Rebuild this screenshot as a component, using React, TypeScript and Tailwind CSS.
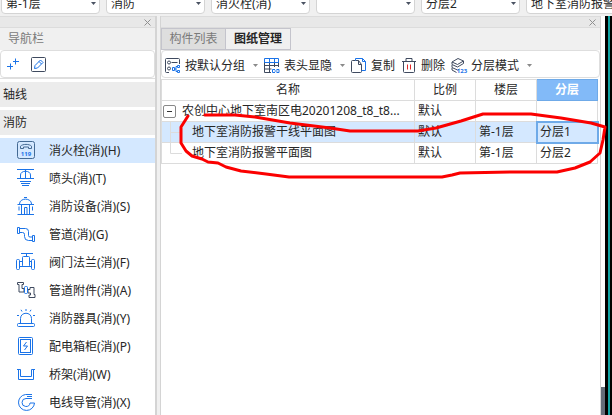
import React, { useState } from 'react';

const BLUE = '#1a73e8';
const DARK = '#3f4a5f';

const filters = ['第-1层', '消防', '消火栓(消)', '', '分层2', '地下室消防报警干线平面图'];

function Icon({ children, color = BLUE }: { children: React.ReactNode; color?: string }) {
  return (
    <svg className="h-[19px] w-5 shrink-0" viewBox="0 0 20 19" fill="none" stroke={color} aria-hidden="true">
      {children}
    </svg>
  );
}

const navItems = [
  {
    label: '消火栓(消)(H)',
    icon: (
      <Icon color="#446a94">
        <rect x="1.5" y="0.5" width="17" height="17" rx="2" />
        <path d="M4.5 7.5V5.2C6.5 2.8 13.5 2.8 15.5 5.2v2.3h-3V6h-5v1.5z" />
        <text x="10" y="14.5" textAnchor="middle" fontSize="6" fontWeight="bold" fill={BLUE} stroke="none">119</text>
      </Icon>
    ),
  },
  {
    label: '喷头(消)(T)',
    icon: (
      <Icon>
        <path d="M1 .5h17M9.500 .5v9M4.500 9.500V6c0-5 10-5 10 0v3.500M1 9.500h17M4 12.500h11M5 14.500h9M6 16.500h7" />
      </Icon>
    ),
  },
  {
    label: '消防设备(消)(S)',
    icon: (
      <Icon>
        <path d="M8 .5h3M3.500 7C3.500.5 15.500.5 15.500 7M1.500 7.500h16.500M3 9.500v4M16.500 9.500v4M5.500 8v9.500M13.500 8v9.500M8.500 17V10.500h2.500V17M1.500 17.500h16.500" />
      </Icon>
    ),
  },
  {
    label: '管道(消)(G)',
    icon: (
      <Icon>
        <path d="M1.500 2.500h2v6h-2zM3.500 3.500h6q3 0 3 3v4q0 1.500 1.500 1.500h2.500M3.500 7.500h3q2 0 2 2v2q0 4 4 4h4M16.500 10.500h2v6h-2z" />
      </Icon>
    ),
  },
  {
    label: '阀门法兰(消)(F)',
    icon: (
      <Icon>
        <path d="M5 .5h12M10.500 .5v3M7.500 3.500h5q1 0 1 1V12.500q0 1-1 1h-5q-1 0-1-1V4.500q0-1 1-1zM3.500 8.500h3M13.500 8.500h2M3.500 13.500h12" />
        <rect x=".5" y="6.500" width="3" height="10" rx="1" />
        <rect x="15.500" y="6.500" width="3" height="10" rx="1" />
      </Icon>
    ),
  },
  {
    label: '管道附件(消)(A)',
    icon: (
      <Icon color={DARK}>
        <path d="M1.500 1.500h6v2h-1.500v4h2v3.500h-5V3.500h-1.500zM12 8.500h2v-2h4v7h1v3h-6v-2.500h1.500V12H12z" />
        <rect x="8.500" y="5.500" width="3" height="7" rx="1" stroke={BLUE} />
      </Icon>
    ),
  },
  {
    label: '消防器具(消)(Y)',
    icon: (
      <Icon>
        <path d="M4.500 14V9.500c0-7 11-7 11 0V14M10 0v2M5 .8l1 1.700M15 .8l-1 1.700M1 6.500h2M17 6.500h2" />
        <rect x="1.500" y="14.500" width="17" height="3" rx="1" />
      </Icon>
    ),
  },
  {
    label: '配电箱柜(消)(P)',
    icon: (
      <Icon>
        <rect x="2.500" y=".5" width="14" height="17" rx="1" />
        <rect x="4.500" y="2.500" width="10" height="13" />
        <path d="M10.500 5l-3 4h4l-3 4" />
      </Icon>
    ),
  },
  {
    label: '桥架(消)(W)',
    icon: (
      <Icon>
        <path d="M1 4.500h3.500v7h11v-7H19M2.500 5v9.500h15V5" />
      </Icon>
    ),
  },
  {
    label: '电线导管(消)(X)',
    icon: (
      <Icon>
        <path d="M16 1.500H9.500a8 8 0 1 0 9 8.500h-4.500a4 4 0 1 1-4-4.500H16M11 3.500h5" />
      </Icon>
    ),
  },
];

const columns = ['名称', '比例', '楼层', '分层'];

const drawings = [
  { name: '地下室消防报警干线平面图', scale: '默认', floor: '第-1层', layer: '分层1' },
  { name: '地下室消防报警平面图', scale: '默认', floor: '第-1层', layer: '分层2' },
];

const tools = [
  {
    label: '按默认分组',
    menu: true,
    icon: (
      <svg className="h-4 w-4" viewBox="0 0 16 16" fill="none" stroke={DARK} aria-hidden="true">
        <path d="M14.500 6V1.500q0-1-1-1h-12q-1 0-1 1v12q0 1 1 1H4M6.500 4.500h6" />
        <circle cx="4" cy="4.500" r="1.500" />
        <circle cx="4" cy="10.500" r="1.500" />
        <path stroke={BLUE} d="M7.500 9.500h2v3h-2zM12.500 7.500h2v2h-2zM12.500 12.500h2v2h-2zM9.500 11h1.500M12.500 8.500H11v5h1.500" />
      </svg>
    ),
  },
  {
    label: '表头显隐',
    menu: true,
    icon: (
      <svg className="h-4 w-4" viewBox="0 0 16 16" fill="none" stroke={DARK} aria-hidden="true">
        <path d="M.5 4v10.500H7M.5 7.500h14M.5 11h7M5.500 4v10.500M10.500 4v5M14.500 4v5" />
        <path stroke={BLUE} d="M.5 4.500v-4h14v4zM5.500 .5v4M10.500 .5v4M11 11.500H8.500v3H11M12.500 11.500H15v3h-2.500M10.500 13h3" />
      </svg>
    ),
  },
  {
    label: '复制',
    icon: (
      <svg className="h-4 w-4" viewBox="0 0 16 16" fill="none" stroke={DARK} aria-hidden="true">
        <path d="M4.500 2.500h-3q-1 0-1 1v10q0 1 1 1h8q1 0 1-1V6.500l-3-4h-3M7.500 2.500v4h3" />
        <path stroke={BLUE} d="M4.500 2.500v-2h7l3 3v9h-4M11.500 .5v3h3" />
      </svg>
    ),
  },
  {
    label: '删除',
    icon: (
      <svg className="h-4 w-4" viewBox="0 0 16 16" fill="none" stroke={DARK} aria-hidden="true">
        <path d="M1 3.500h14M5 3V.5h6V3M2.500 4v9.500q0 1 1 1h9q1 0 1-1V4" />
        <path stroke="#e02828" d="M6.500 6.500v5M9.500 6.500v5" />
      </svg>
    ),
  },
  {
    label: '分层模式',
    menu: true,
    icon: (
      <svg className="h-4 w-4 overflow-visible" viewBox="0 0 16 16" fill="none" stroke={DARK} aria-hidden="true">
        <path d="M1 4l6-3.500L12.500 3 6.500 6.500zM1 4v2.500L6.500 9l6-3.500V3M1 7v2.500L6.500 12l2-1M1 10v2l4.500 2.500" />
        <text x="11" y="14.500" textAnchor="middle" fontSize="6" fontWeight="bold" fill={BLUE} stroke="none">123</text>
      </svg>
    ),
  },
];

function Caret({ className = '' }: { className?: string }) {
  return (
    <svg className={`h-[3px] w-[5px] shrink-0 ${className}`} viewBox="0 0 5 3" fill="currentColor" aria-hidden="true">
      <path d="M0 0h5L2.500 3z" />
    </svg>
  );
}

function PanelStrip() {
  return (
    <div className="flex h-3 shrink-0 items-center justify-end border-y border-[#dcdcdc] bg-[#e8e8e8] px-1">
      <button type="button" aria-label="关闭" className="text-[#909090]">
        <svg className="h-[7px] w-[7px]" viewBox="0 0 7 7" stroke="currentColor">
          <path d="M.5 .5l6 6M6.500 .5l-6 6" />
        </svg>
      </button>
    </div>
  );
}

function TreeLine({ last }: { last?: boolean }) {
  return (
    <svg className="h-5 w-3 shrink-0" viewBox="0 0 12 20" fill="none" stroke="#dcdcdc" aria-hidden="true">
      <path d={last ? 'M.5 0v10.500H12' : 'M.5 0v20M.5 10.500H12'} />
    </svg>
  );
}

export default function App() {
  const [active, setActive] = useState(0);
  const [open, setOpen] = useState(true);

  return (
    <div className="relative flex h-screen flex-col overflow-hidden bg-[#f0f0f0] font-['Noto_Sans','Noto_Sans_CJK_SC',sans-serif] text-xs text-[#262626]">
      <header className="flex h-4 shrink-0 items-end gap-1.5 overflow-hidden px-px pb-0.5">
        {filters.map((f, i) => (
          <div key={i} className="relative w-[99px] shrink-0">
            <select aria-label={`筛选${i + 1}`} className="block h-5 w-full appearance-none rounded-sm border border-[#d4d4d4] bg-white pl-1 leading-4">
              <option>{f}</option>
            </select>
            <Caret className="pointer-events-none absolute right-1 top-2 text-[#4a5262]" />
          </div>
        ))}
      </header>

      <main className="flex min-h-0 flex-1">
        <aside className="flex w-[157px] shrink-0 flex-col border-r-2 border-[#d4d4d4] bg-white">
          <PanelStrip />
          <h2 className="h-[22px] bg-[#f0f0f0] pl-2 leading-[22px] text-[#7a7a7a]">导航栏</h2>
          <div className="flex h-7 items-center gap-3 rounded border border-[#dedede] pl-1.5">
            <button type="button" aria-label="添加">
              <svg className="h-3 w-3" viewBox="0 0 12 12" stroke={BLUE}>
                <path d="M0 8.500h6M3.500 5.500v6M6 3.500h6M8.500 .5v6" />
              </svg>
            </button>
            <button type="button" aria-label="编辑">
              <svg className="h-[15px] w-[15px]" viewBox="0 0 15 15" fill="none" stroke={DARK}>
                <rect x=".5" y=".5" width="14" height="14" rx="1" />
                <path stroke={BLUE} d="M3.500 11.500l.5-3 5.500-5.500 2.500 2.500-5.500 5.500zM8 4.500l2.500 2.500" />
              </svg>
            </button>
          </div>
          <nav className="flex flex-col gap-[3px] border-t border-[#dedede] pt-[3px]">
            <button type="button" className="h-[25px] bg-[#ececec] pl-[3px] text-left">轴线</button>
            <button type="button" className="h-[25px] bg-[#ececec] pl-[3px] text-left">消防</button>
            {navItems.map((item, i) => (
              <button
                key={item.label}
                type="button"
                onClick={() => setActive(i)}
                className={`flex h-[25px] shrink-0 items-center gap-[13px] pl-4 text-left ${i === active ? 'bg-[#d4e8ff]' : ''}`}
              >
                {item.icon}
                <span className="whitespace-nowrap">{item.label}</span>
              </button>
            ))}
          </nav>
        </aside>

        <section className="ml-[3px] flex min-w-0 flex-1 flex-col border-x border-[#d4d4d4] bg-white">
          <PanelStrip />
          <div className="flex h-[22px] bg-[#f0f0f0]" role="tablist">
            <button type="button" role="tab" aria-selected="false" className="w-[65px] border border-[#c4c4cc] bg-[#dedede] text-[#7a7a7a]">构件列表</button>
            <button type="button" role="tab" aria-selected="true" className="w-[65px] border border-l-0 border-[#c4c4cc] font-bold">图纸管理</button>
          </div>
          <div className="flex h-7 items-center gap-1.5 rounded border border-[#dedede] pl-[3px] pt-[3px]">
            {tools.map((t) => (
              <button key={t.label} type="button" className="flex shrink-0 items-center gap-1 whitespace-nowrap">
                {t.icon}
                {t.label}
                {t.menu && <Caret className="ml-1 text-[#8a8a8a]" />}
              </button>
            ))}
          </div>
          <div className="pr-0.5 pt-px">
            <table className="w-full table-fixed border-collapse leading-5">
              <colgroup>
                <col />
                <col className="w-[61px]" />
                <col className="w-[61px]" />
                <col className="w-[61px]" />
              </colgroup>
              <thead>
                <tr>
                  {columns.map((c) => (
                    <th
                      key={c}
                      className={`h-[21px] border p-0 ${c === '分层' ? 'border-[#6faae8] bg-[#82baf8] font-bold text-white' : 'border-[#dcdcdc] font-normal'}`}
                    >
                      {c}
                    </th>
                  ))}
                </tr>
              </thead>
              <tbody>
                <tr>
                  <td className="border border-[#dcdcdc] p-0">
                    <div className="flex items-center gap-1.5 pl-px">
                      <button
                        type="button"
                        aria-label="展开或折叠"
                        onClick={() => setOpen(!open)}
                        className="flex h-[13px] w-[13px] shrink-0 items-center justify-center rounded-xs border border-[#888]"
                      >
                        <span className="h-px w-[5px] bg-[#333]" />
                      </button>
                      <span className="whitespace-nowrap">农创中心地下室南区电20201208_t8_t8...</span>
                    </div>
                  </td>
                  <td className="border border-[#dcdcdc] px-[3px] py-0">默认</td>
                  <td className="border border-[#dcdcdc] p-0" />
                  <td className="border border-[#dcdcdc] p-0" />
                </tr>
                {open && drawings.map((d, i) => (
                  <tr key={d.name} className={i === 0 ? 'bg-[#d4e8ff]' : ''}>
                    <td className="border border-[#dcdcdc] p-0">
                      <div className="flex items-center gap-2.5 pl-2">
                        <TreeLine last={i === drawings.length - 1} />
                        <span className="whitespace-nowrap">{d.name}</span>
                      </div>
                    </td>
                    <td className="border border-[#dcdcdc] px-[3px] py-0">{d.scale}</td>
                    <td className="border border-[#dcdcdc] px-[3px] py-0">{d.floor}</td>
                    <td className={`border border-[#dcdcdc] px-[3px] py-0 ${i === 0 ? 'outline-2 -outline-offset-1 outline-[#6faae8]' : ''}`}>{d.layer}</td>
                  </tr>
                ))}
              </tbody>
            </table>
          </div>
        </section>

        <div className="flex w-1 shrink-0 flex-col justify-end bg-white">
          <div className="h-7 bg-[#646c78]" />
        </div>
        <div className="flex w-[7px] shrink-0 bg-black pl-[3px]">
          <div className="flex-1 border-l-2 border-[#12a5a5]" />
        </div>
      </main>

      {/* hand-drawn mark around the two drawings */}
      <svg className="pointer-events-none absolute left-0 top-0 h-[415px] w-[612px]" viewBox="0 0 612 415" fill="none" stroke="#fb0000" strokeWidth="3" strokeLinecap="round" strokeLinejoin="round" aria-hidden="true">
        <path d="M188 116l-7 11v16l5 8 6 5 10 3 6 3 10 1 8 4 15 4 25 3 23 3H442l10-2 8-2 50-1h47l18-4 15-6 10-9 3-13 2-13-14-4-30-5-30-4h-48l-22 7-25 7-18 3h-68l-20-3-40-5-35-6-20-2h-30" />
      </svg>
    </div>
  );
}
